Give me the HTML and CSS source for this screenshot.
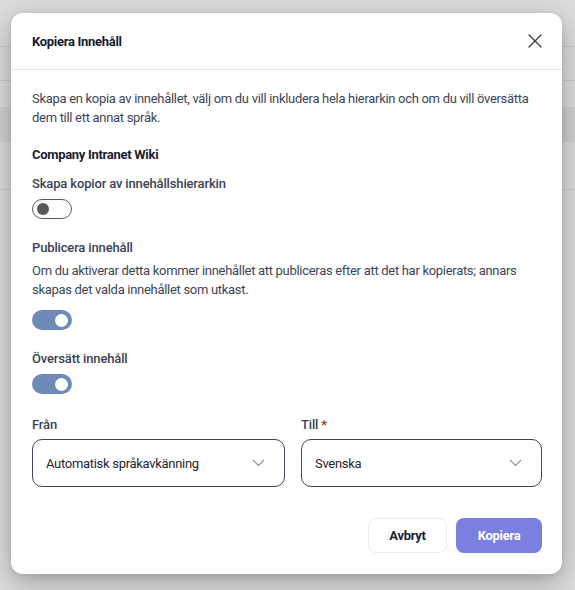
FILE: index.html
```html
<!DOCTYPE html>
<html lang="sv">
<head>
<meta charset="utf-8">
<title>Kopiera Innehåll</title>
<link rel="stylesheet" href="styles.css">
</head>
<body>
<div class="backdrop">
  <div class="bd-row bd-top"></div>
  <div class="bd-row bd-r1"></div>
  <div class="bd-row bd-r2"></div>
  <div class="bd-row bd-band"></div>
  <div class="bd-row bd-r3"></div>
</div>

<div class="modal" role="dialog" aria-labelledby="dlg-title">
  <header class="modal-header">
    <h2 id="dlg-title" class="modal-title">Kopiera Innehåll</h2>
    <button class="close-btn" aria-label="Stäng">
      <svg width="14" height="14" viewBox="0 0 14 14"><path d="M1 1 L13 13 M13 1 L1 13" stroke="#3a3f4b" stroke-width="1.4" fill="none" stroke-linecap="round"/></svg>
    </button>
  </header>

  <div class="modal-body">
    <p class="intro">Skapa en kopia av innehållet, välj om du vill inkludera hela hierarkin och om du vill översätta dem till ett annat språk.</p>

    <div class="site-name">Company Intranet Wiki</div>

    <div class="field field-first">
      <div class="field-label">Skapa kopior av innehållshierarkin</div>
      <div class="toggle toggle-off"><span class="knob"></span></div>
    </div>

    <div class="field">
      <div class="field-label">Publicera innehåll</div>
      <p class="field-help">Om du aktiverar detta kommer innehållet att publiceras efter att det har kopierats; annars skapas det valda innehållet som utkast.</p>
      <div class="toggle toggle-on toggle-spaced"><span class="knob"></span></div>
    </div>

    <div class="field">
      <div class="field-label">Översätt innehåll</div>
      <div class="toggle toggle-on"><span class="knob"></span></div>
    </div>

    <div class="lang-grid">
      <div class="lang-col">
        <div class="field-label">Från</div>
        <div class="select">
          <span>Automatisk språkavkänning</span>
          <svg class="chev" width="13" height="8" viewBox="0 0 13 8"><path d="M1 1 L6.5 6.5 L12 1" stroke="#8a8f9c" stroke-width="1.1" fill="none"/></svg>
        </div>
      </div>
      <div class="lang-col">
        <div class="field-label">Till <span class="req">*</span></div>
        <div class="select">
          <span>Svenska</span>
          <svg class="chev" width="13" height="8" viewBox="0 0 13 8"><path d="M1 1 L6.5 6.5 L12 1" stroke="#8a8f9c" stroke-width="1.1" fill="none"/></svg>
        </div>
      </div>
    </div>

    <div class="actions">
      <button class="btn btn-secondary">Avbryt</button>
      <button class="btn btn-primary">Kopiera</button>
    </div>
  </div>
</div>
</body>
</html>
```

FILE: styles.css
```css
* { box-sizing: border-box; }

html, body {
  margin: 0;
  padding: 0;
  width: 575px;
  height: 590px;
  overflow: hidden;
}

body {
  background: #dcdcdc;
  font-family: Roboto, "Liberation Sans", sans-serif;
  letter-spacing: -0.3px;
  position: relative;
}

.backdrop {
  display: flex;
  flex-direction: column;
}

.bd-row { border-bottom: 1px solid #c9c9c9; }
.bd-top { height: 47px; }
.bd-r1 { height: 34px; }
.bd-r2 { height: 26px; border-bottom: none; }
.bd-band { height: 35px; background: #cfcfcf; border-bottom: none; }
.bd-r3 { height: 48px; }

.modal {
  position: absolute;
  left: 11px;
  top: 13px;
  width: 551px;
  height: 561px;
  background: #ffffff;
  border-radius: 12px;
  box-shadow: 0 8px 28px rgba(0, 0, 0, 0.28), 0 2px 6px rgba(0, 0, 0, 0.08);
  display: flex;
  flex-direction: column;
}

.modal-header {
  height: 57px;
  padding: 0 20px 0 21px;
  display: flex;
  align-items: center;
  justify-content: space-between;
  border-bottom: 1px solid #e6e6e6;
}

.modal-title {
  margin: 0;
  font-size: 13px;
  font-weight: 700;
  color: #141a2e;
}

.close-btn {
  border: none;
  background: none;
  padding: 0;
  width: 14px;
  height: 14px;
  display: flex;
}

.modal-body {
  padding: 19px 20px 21px 21px;
  display: flex;
  flex-direction: column;
  flex: 1;
}

.intro {
  margin: 0;
  font-size: 13px;
  line-height: 19px;
  color: #3e4557;
}

.site-name {
  margin-top: 18px;
  font-size: 13px;
  line-height: 19px;
  font-weight: 700;
  color: #1b2133;
}

.field {
  margin-top: 19px;
  display: flex;
  flex-direction: column;
}

.field-first { margin-top: 10px; }

.field-label {
  font-size: 13px;
  line-height: 19px;
  font-weight: 500;
  letter-spacing: -0.15px;
  color: #3b4256;
}

.field-help {
  margin: 4px 0 0;
  font-size: 13px;
  line-height: 19px;
  color: #3e4557;
}

.toggle {
  margin-top: 6px;
  width: 40px;
  height: 20px;
  border-radius: 10px;
  display: flex;
  align-items: center;
  padding: 0 4px;
}

.toggle-spaced { margin-top: 11px; }

.toggle-off {
  border: 1.3px solid #5a5a5a;
  background: #fff;
}

.toggle-off .knob {
  width: 12px;
  height: 12px;
  border-radius: 50%;
  background: #585858;
}

.toggle-on {
  background: #6e8ab6;
  justify-content: flex-end;
}

.toggle-on .knob {
  width: 13px;
  height: 13px;
  border-radius: 50%;
  background: #ffffff;
}

.lang-grid {
  margin-top: 21px;
  display: grid;
  grid-template-columns: 253px 1fr;
  column-gap: 16px;
}

.lang-col {
  display: flex;
  flex-direction: column;
}

.req { color: #b3261e; }

.select {
  margin-top: 5px;
  height: 48px;
  border: 1px solid #3e4557;
  border-radius: 10px;
  display: flex;
  align-items: center;
  justify-content: space-between;
  padding: 0 19px 0 13px;
  font-size: 13px;
  color: #1f2433;
}

.chev { display: block; }

.actions {
  margin-top: auto;
  display: flex;
  justify-content: flex-end;
  gap: 9px;
}

.btn {
  height: 35px;
  border-radius: 8px;
  font-family: Roboto, "Liberation Sans", sans-serif;
  font-size: 13px;
  font-weight: 700;
  letter-spacing: -0.3px;
  cursor: pointer;
}

.btn-secondary {
  width: 79px;
  background: #ffffff;
  border: 1px solid #ececec;
  color: #1b2133;
}

.btn-primary {
  width: 86px;
  background: #7b7fdf;
  border: none;
  color: #ffffff;
}
```
